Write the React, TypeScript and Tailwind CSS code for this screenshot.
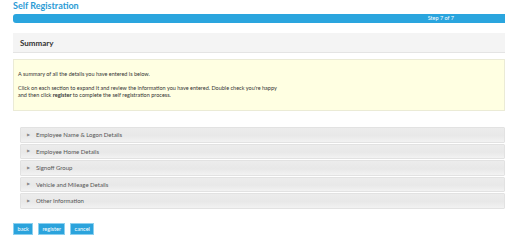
import React from "react";

const rows = [
  "Employee Name & Logon Details",
  "Employee Home Details",
  "Signoff Group",
  "Vehicle and Mileage Details",
  "Other Information",
];

export default function App() {
  return (
    <div className="w-[505px] h-[241px] overflow-hidden bg-white pl-[13px] font-['Lato',sans-serif] text-[#333]">
      <div className="h-[14px] text-[9px] font-bold leading-[10px] text-[#2b9bd5] pt-[1px]">
        Self Registration
      </div>
      <div className="h-[9px] bg-[#2aa5de] rounded-l-[3px] flex items-center justify-end pr-[51px] text-[5.5px] text-white">
        Step 7 of 7
      </div>
      <div className="mt-[10px] h-[20px] bg-[#f4f4f4] border-b border-[#e4e4e4] flex items-center pl-[7px] text-[8px] font-bold text-[#333]">
        Summary
      </div>
      <div className="mt-[6px] h-[52px] bg-[#ffffe2] border border-[#ebebd6] pl-[4px] pt-[11px] text-[5.5px] leading-[7px] text-[#333]">
        <p>A summary of all the details you have entered is below.</p>
        <p className="mt-[7px]">
          Click on each section to expand it and review the information you have entered. Double check you're happy
          <br />
          and then click <b>register</b> to complete the self registration process.
        </p>
      </div>
      <div className="mt-[16px] ml-[7px] flex flex-col gap-[1px]">
        {rows.map((r) => (
          <div
            key={r}
            className="h-[15.5px] flex items-center border border-[#e2e2e2] rounded-[1px] bg-[linear-gradient(#ececec,#e8e8e8_55%,#f2f2f2)] text-[6px] text-[#555]"
          >
            <span className="ml-[6px] w-[9px] text-[4px] text-[#888]">▶</span>
            <span>{r}</span>
          </div>
        ))}
      </div>
      <div className="mt-[14px] flex gap-[4.5px]">
        {["back", "register", "cancel"].map((b) => (
          <button
            key={b}
            className="h-[12.5px] px-[3.5px] bg-[#2ba3dc] text-white text-[5.6px] leading-none border border-[#8cd0ef]"
          >
            {b}
          </button>
        ))}
      </div>
    </div>
  );
}
